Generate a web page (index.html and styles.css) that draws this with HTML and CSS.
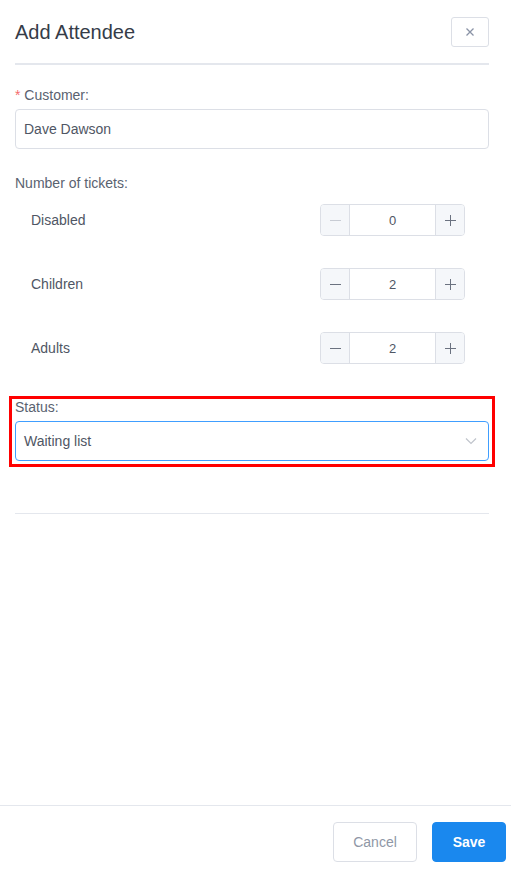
FILE: index.html
```html
<!DOCTYPE html>
<html>
<head>
<meta charset="utf-8">
<link rel="stylesheet" href="styles.css">
</head>
<body>
<div class="drawer">
  <div class="header">
    <h1 class="title">Add Attendee</h1>
    <button class="close-btn" aria-label="Close">
      <svg width="10" height="10" viewBox="0 0 10 10"><path d="M1.5 1.5 L8.5 8.5 M8.5 1.5 L1.5 8.5" stroke="#8a93a6" stroke-width="1.3" fill="none"/></svg>
    </button>
  </div>
  <div class="body">
    <div class="field">
      <div class="label"><span class="req">*</span> Customer:</div>
      <div class="input">Dave Dawson</div>
    </div>
    <div class="field tickets">
      <div class="label">Number of tickets:</div>
      <div class="ticket-rows">
        <div class="ticket-row">
          <span class="ticket-name">Disabled</span>
          <div class="stepper">
            <span class="step disabled"><svg width="11" height="11" viewBox="0 0 11 11"><path d="M0 5.5 H11" stroke="currentColor" stroke-width="1"/></svg></span>
            <span class="step-value">0</span>
            <span class="step"><svg width="11" height="11" viewBox="0 0 11 11"><path d="M0 5.5 H11 M5.5 0 V11" stroke="currentColor" stroke-width="1"/></svg></span>
          </div>
        </div>
        <div class="ticket-row">
          <span class="ticket-name">Children</span>
          <div class="stepper">
            <span class="step"><svg width="11" height="11" viewBox="0 0 11 11"><path d="M0 5.5 H11" stroke="currentColor" stroke-width="1"/></svg></span>
            <span class="step-value">2</span>
            <span class="step"><svg width="11" height="11" viewBox="0 0 11 11"><path d="M0 5.5 H11 M5.5 0 V11" stroke="currentColor" stroke-width="1"/></svg></span>
          </div>
        </div>
        <div class="ticket-row">
          <span class="ticket-name">Adults</span>
          <div class="stepper">
            <span class="step"><svg width="11" height="11" viewBox="0 0 11 11"><path d="M0 5.5 H11" stroke="currentColor" stroke-width="1"/></svg></span>
            <span class="step-value">2</span>
            <span class="step"><svg width="11" height="11" viewBox="0 0 11 11"><path d="M0 5.5 H11 M5.5 0 V11" stroke="currentColor" stroke-width="1"/></svg></span>
          </div>
        </div>
      </div>
    </div>
    <div class="status-item">
      <div class="label status-label">Status:</div>
      <div class="select">
        <span>Waiting list</span>
        <svg class="chevron" width="12" height="8" viewBox="0 0 12 8"><path d="M1 1.5 L6 6.5 L11 1.5" stroke="#c0c4cc" stroke-width="1.2" fill="none"/></svg>
      </div>
    </div>
    <div class="divider"></div>
  </div>
  <div class="footer">
    <button class="btn cancel">Cancel</button>
    <button class="btn save">Save</button>
  </div>
</div>
</body>
</html>
```
FILE: styles.css
```css
* { box-sizing: border-box; }
html, body { margin: 0; padding: 0; background: #fff; }
body {
  font-family: "Liberation Sans", Arial, sans-serif;
  color: #5a6270;
  font-size: 14px;
}
.drawer {
  width: 511px;
  height: 869px;
  display: flex;
  flex-direction: column;
}
.header {
  margin: 0 22px 0 15px;
  padding: 17px 0 16px;
  border-bottom: 2px solid #e4e7ed;
  display: flex;
  align-items: center;
  justify-content: space-between;
}
.title {
  margin: 0;
  font-size: 20px;
  font-weight: normal;
  color: #353c48;
  line-height: 30px;
}
.close-btn {
  width: 38px;
  height: 30px;
  border: 1px solid #dcdfe6;
  border-radius: 3px;
  background: #fff;
  padding: 0;
  display: flex;
  align-items: center;
  justify-content: center;
}
.body {
  flex: 1;
  margin: 0 22px 0 15px;
  padding-top: 20px;
}
.label {
  line-height: 20px;
  color: #5a6270;
}
.req { color: #f56c6c; }
.field .label { margin-bottom: 4px; }
.input {
  height: 40px;
  border: 1px solid #dcdfe6;
  border-radius: 4px;
  padding: 0 8px;
  display: flex;
  align-items: center;
  color: #4f5664;
}
.tickets { margin-top: 24px; }
.tickets .label { margin-bottom: 11px; }
.ticket-rows {
  display: flex;
  flex-direction: column;
  gap: 32px;
  padding-left: 16px;
  padding-right: 24px;
}
.ticket-row {
  display: flex;
  align-items: center;
  justify-content: space-between;
  height: 32px;
}
.ticket-name { color: #4f5664; }
.stepper {
  width: 145px;
  height: 32px;
  border: 1px solid #dcdfe6;
  border-radius: 4px;
  display: flex;
  overflow: hidden;
}
.step {
  width: 29px;
  background: #f5f7fa;
  color: #6b7280;
  display: flex;
  align-items: center;
  justify-content: center;
}
.step:first-child { border-right: 1px solid #dcdfe6; }
.step:last-child { border-left: 1px solid #dcdfe6; }
.step.disabled { color: #c8ccd4; }
.step-value {
  flex: 1;
  display: flex;
  align-items: center;
  justify-content: center;
  font-size: 13px;
  color: #4f5664;
}
.status-item {
  margin: 35px -3px 0;
  padding: 0 3px 3px;
  outline: 3px solid #ff0000;
}
.status-label {
  line-height: 16px;
  margin-bottom: 6px;
}
.select {
  height: 40px;
  border: 1px solid #409eff;
  border-radius: 4px;
  padding: 0 11px 0 8px;
  display: flex;
  align-items: center;
  justify-content: space-between;
  color: #4f5664;
}
.divider {
  margin-top: 49px;
  height: 1px;
  background: #e4e7ed;
}
.footer {
  border-top: 1px solid #e4e7ed;
  padding: 16px 5px 7px;
  display: flex;
  justify-content: flex-end;
  gap: 15px;
}
.btn {
  height: 40px;
  border-radius: 4px;
  font-family: "Liberation Sans", Arial, sans-serif;
  font-size: 14px;
  padding: 0;
}
.cancel {
  width: 84px;
  background: #fff;
  border: 1px solid #dcdfe6;
  color: #8f97a6;
}
.save {
  width: 74px;
  background: #1a88ee;
  border: 1px solid #1a88ee;
  color: #fff;
  font-weight: bold;
}
```
